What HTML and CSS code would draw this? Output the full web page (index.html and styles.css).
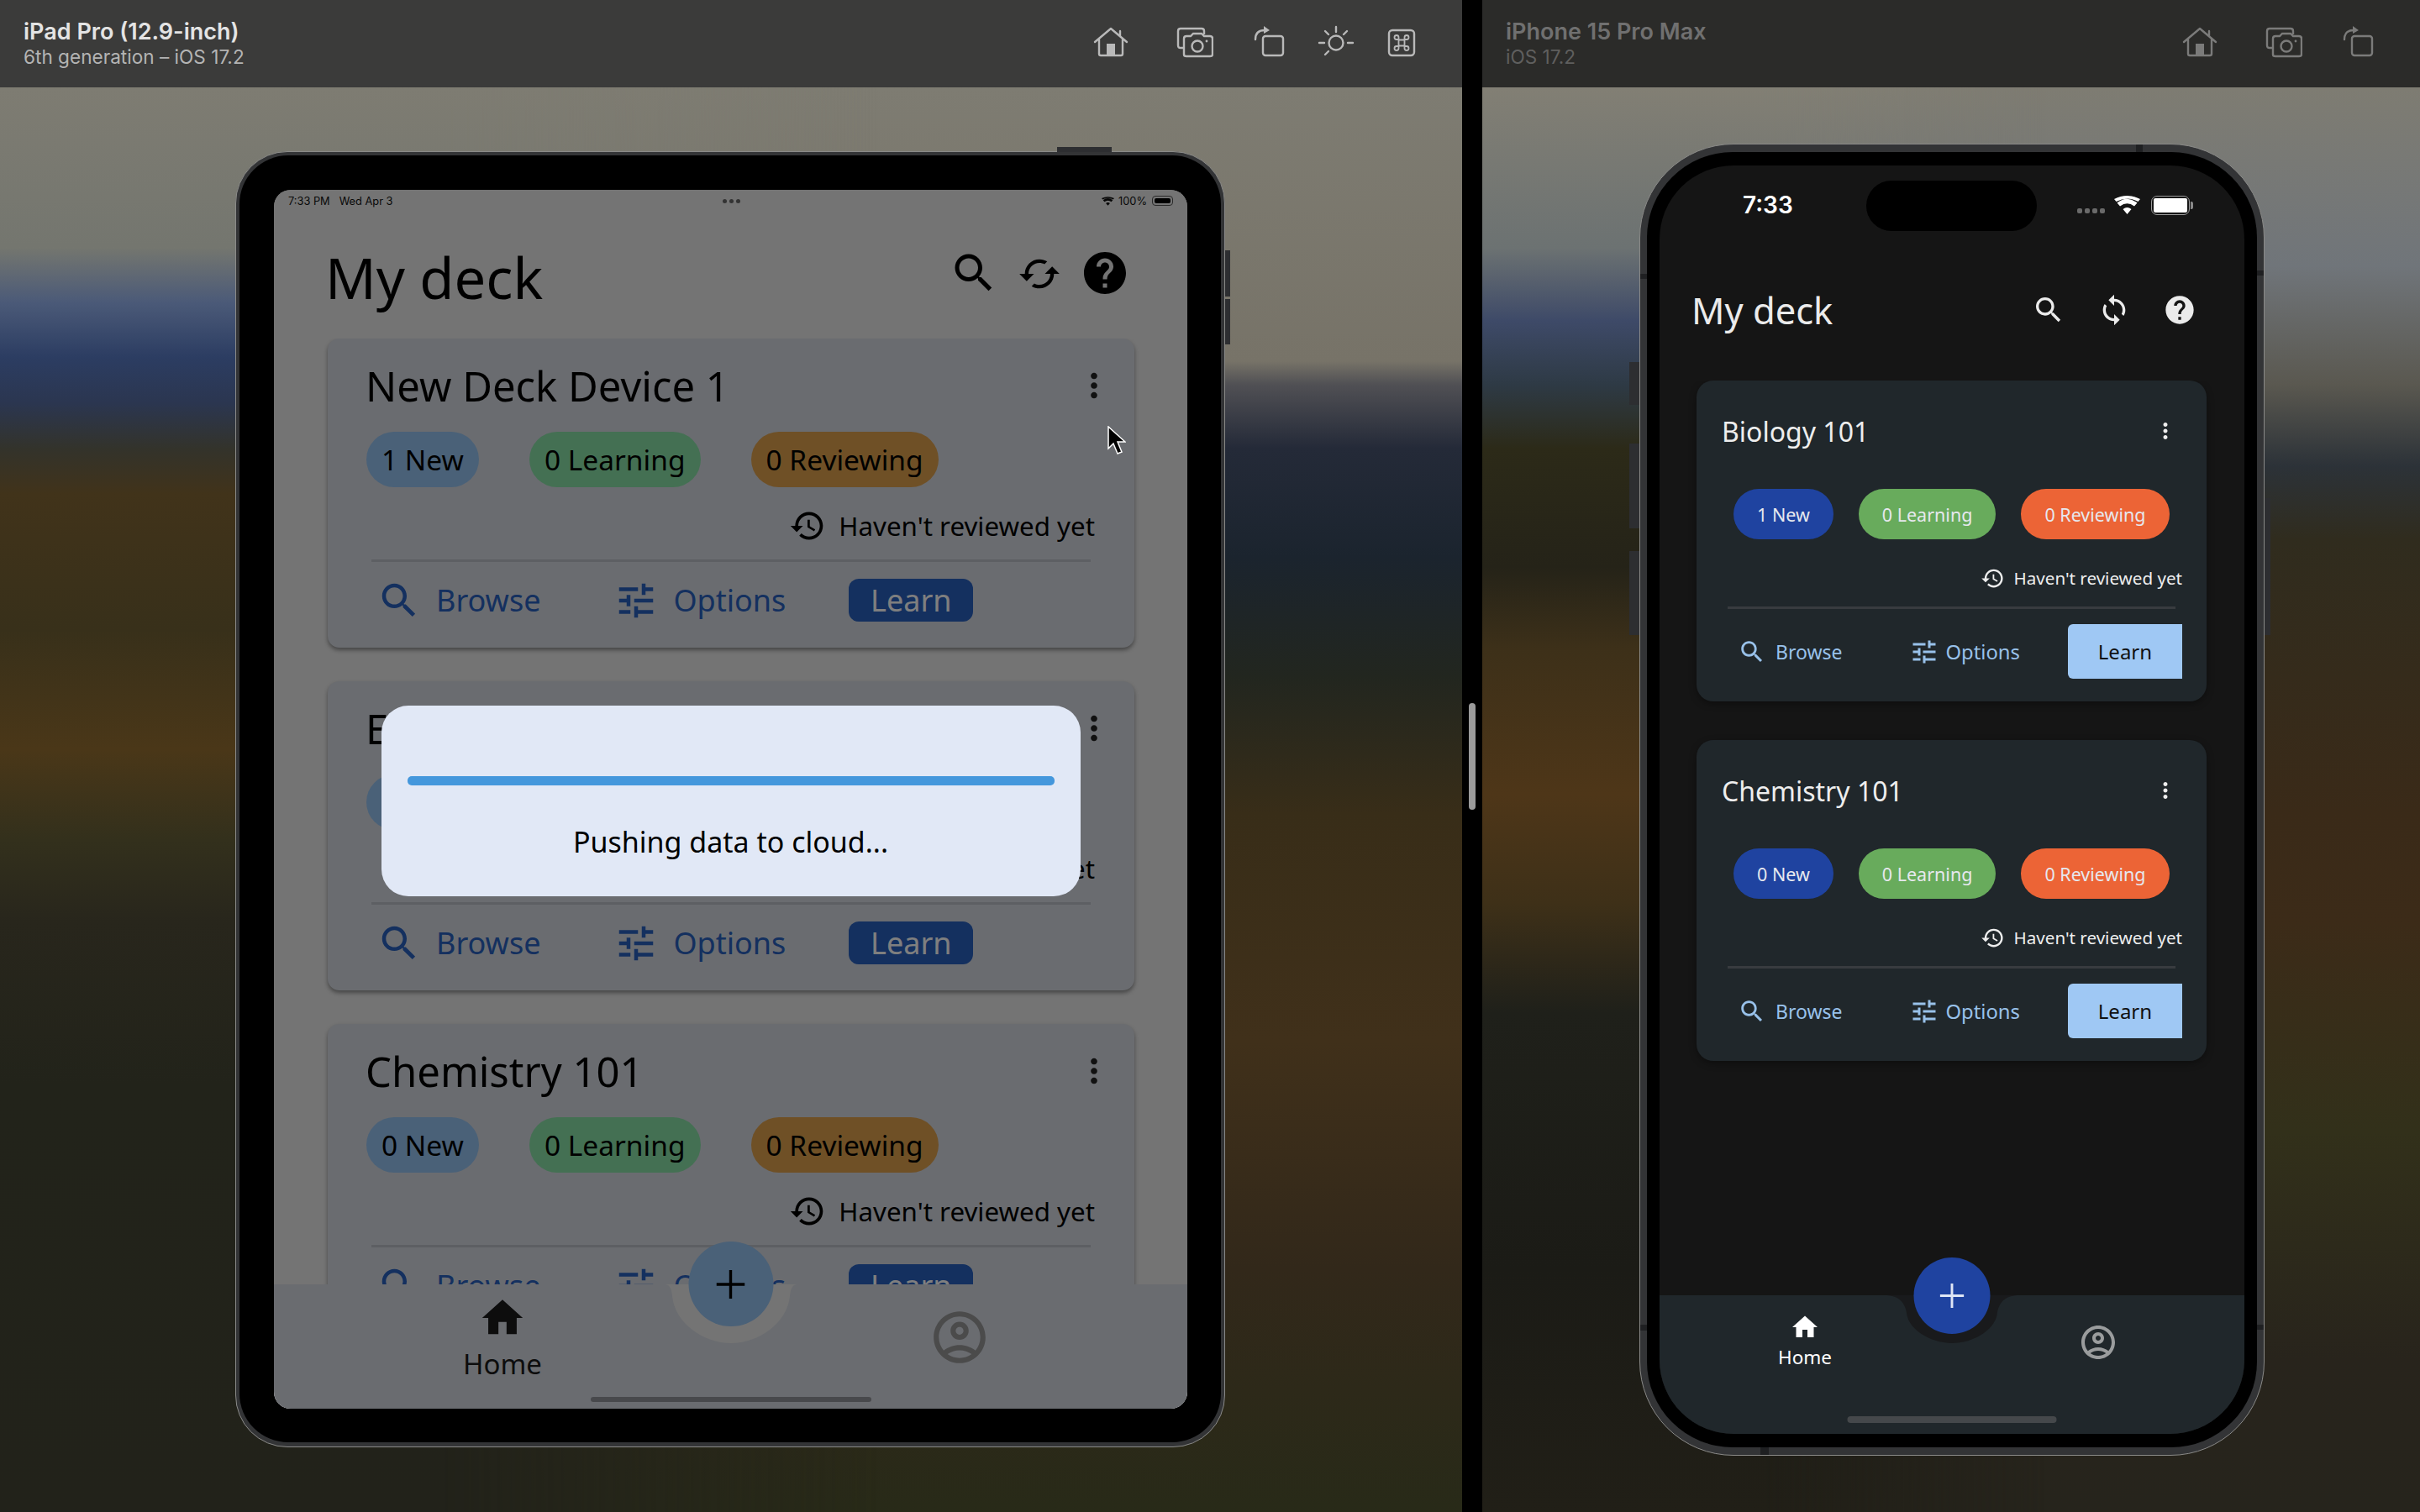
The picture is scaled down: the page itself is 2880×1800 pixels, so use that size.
FILE: index.html
```html
<!DOCTYPE html>
<html lang="en">
<head>
    <meta charset="UTF-8">
    <meta name="viewport" content="width=device-width, initial-scale=1.0">
    <title>Simulator - My deck</title>
    <link rel="stylesheet" href="styles.css">
</head>
<body>
    <svg class="sprite" aria-hidden="true">
        <symbol id="i-search" viewBox="0 0 24 24"><path d="M15.5 14h-.79l-.28-.27C15.41 12.59 16 11.11 16 9.5 16 5.91 13.09 3 9.5 3S3 5.91 3 9.5 5.91 16 9.5 16c1.61 0 3.09-.59 4.23-1.57l.27.28v.79l5 4.99L20.49 19l-4.99-5zm-6 0C7.01 14 5 11.99 5 9.5S7.01 5 9.5 5 14 7.01 14 9.5 11.99 14 9.5 14z"/></symbol>
        <symbol id="i-sync" viewBox="0 0 24 24"><path d="M12 4V1L8 5l4 4V6c3.31 0 6 2.69 6 6 0 1.01-.25 1.97-.7 2.8l1.46 1.46C19.54 15.03 20 13.57 20 12c0-4.42-3.58-8-8-8zm0 14c-3.31 0-6-2.69-6-6 0-1.01.25-1.97.7-2.8L5.24 7.74C4.46 8.97 4 10.43 4 12c0 4.42 3.58 8 8 8v3l4-4-4-4v3z"/></symbol>
        <symbol id="i-help" viewBox="0 0 24 24"><path d="M12 2C6.48 2 2 6.48 2 12s4.48 10 10 10 10-4.48 10-10S17.52 2 12 2zm1 17h-2v-2h2v2zm2.07-7.75l-.9.92C13.45 12.9 13 13.5 13 15h-2v-.5c0-1.1.45-2.1 1.17-2.83l1.24-1.26c.37-.36.59-.86.59-1.41 0-1.1-.9-2-2-2s-2 .9-2 2H8c0-2.21 1.79-4 4-4s4 1.79 4 4c0 .88-.36 1.68-.93 2.25z"/></symbol>
        <symbol id="i-more" viewBox="0 0 24 24"><path d="M12 8c1.1 0 2-.9 2-2s-.9-2-2-2-2 .9-2 2 .9 2 2 2zm0 2c-1.1 0-2 .9-2 2s.9 2 2 2 2-.9 2-2-.9-2-2-2zm0 6c-1.1 0-2 .9-2 2s.9 2 2 2 2-.9 2-2-.9-2-2-2z"/></symbol>
        <symbol id="i-history" viewBox="0 0 24 24"><path d="M13 3c-4.97 0-9 4.03-9 9H1l3.89 3.89.07.14L9 12H6c0-3.87 3.13-7 7-7s7 3.13 7 7-3.13 7-7 7c-1.93 0-3.68-.79-4.94-2.06l-1.42 1.42C8.27 19.99 10.51 21 13 21c4.97 0 9-4.03 9-9s-4.03-9-9-9zm-1 5v5l4.28 2.54.72-1.21-3.5-2.08V8H12z"/></symbol>
        <symbol id="i-tune" viewBox="0 0 24 24"><path d="M3 17v2h6v-2H3zM3 5v2h10V5H3zm10 16v-2h8v-2h-8v-2h-2v6h2zM7 9v2H3v2h4v2h2V9H7zm14 4v-2H11v2h10zm-6-4h2V7h4V5h-4V3h-2v6z"/></symbol>
        <symbol id="i-home" viewBox="0 0 24 24"><path d="M10 20v-6h4v6h5v-8h3L12 3 2 12h3v8z"/></symbol>
        <symbol id="i-account" viewBox="0 0 24 24"><path d="M12 2C6.48 2 2 6.48 2 12s4.48 10 10 10 10-4.48 10-10S17.52 2 12 2zM7.35 18.5C8.66 17.56 10.26 17 12 17s3.34.56 4.65 1.5c-1.31.94-2.91 1.5-4.65 1.5s-3.34-.56-4.65-1.5zm10.79-1.38C16.45 15.8 14.32 15 12 15s-4.45.8-6.14 2.12C4.7 15.73 4 13.95 4 12c0-4.42 3.58-8 8-8s8 3.58 8 8c0 1.95-.7 3.73-1.86 5.12zM12 6c-1.93 0-3.5 1.57-3.5 3.5S10.07 13 12 13s3.5-1.57 3.5-3.5S13.93 6 12 6zm0 5c-.83 0-1.5-.67-1.5-1.5S11.17 8 12 8s1.5.67 1.5 1.5S12.83 11 12 11z"/></symbol>
        <symbol id="i-plus" viewBox="0 0 34 34"><path d="M17 0v34M0 17h34" fill="none" stroke="currentColor" stroke-width="3.4"/></symbol>
        <symbol id="t-home" viewBox="0 0 44 40"><path d="M3 20 22 4l19 16M33 7v6M8 17v17q0 2 2 2h24q2 0 2-2V17" fill="none" stroke="currentColor" stroke-width="2.4" stroke-linecap="round" stroke-linejoin="round"/><path d="M17 22h10v14H17z" fill="currentColor"/></symbol>
        <symbol id="t-camera" viewBox="0 0 44 40"><path d="M8 27H5q-3 0-3-3V7q0-3 3-3h25q3 0 3 3v4" fill="none" stroke="currentColor" stroke-width="2.4"/><path d="M12 13h5l3-3h10l3 3h7q3 0 3 3v19q0 2-3 2H12q-3 0-3-2V16q0-3 3-3z" fill="none" stroke="currentColor" stroke-width="2.4"/><circle cx="25" cy="25" r="6.5" fill="none" stroke="currentColor" stroke-width="2.4"/><circle cx="36" cy="19" r="1.4" fill="currentColor"/></symbol>
        <symbol id="t-rotate" viewBox="0 0 44 40"><rect x="15" y="13" width="24" height="23" rx="3" fill="none" stroke="currentColor" stroke-width="2.4"/><path d="M6 17C6 10 10 6 17 6" fill="none" stroke="currentColor" stroke-width="2.4" stroke-linecap="round"/><path d="M16 1l7 5-7 4z" fill="currentColor"/></symbol>
        <symbol id="t-sun" viewBox="0 0 44 40"><circle cx="22" cy="21" r="8.5" fill="none" stroke="currentColor" stroke-width="2.4"/><path d="M22 2v6M9 7l4 4M35 7l-4 4M2 21h6M36 21h6M9 35l4-4" fill="none" stroke="currentColor" stroke-width="2.4" stroke-linecap="round"/></symbol>
        <symbol id="t-cmd" viewBox="0 0 44 40"><rect x="7" y="6" width="30" height="30" rx="4" fill="none" stroke="currentColor" stroke-width="2.4"/><path d="M18.5 17.5h7v7h-7zM18.5 17.5v-3a2.5 2.5 0 1 0-2.500 2.500h3M25.500 17.500v-3a2.500 2.500 0 1 1 2.500 2.500h-3M18.500 24.500v3a2.500 2.500 0 1 1-2.500-2.500h3M25.500 24.500v3a2.500 2.500 0 1 0 2.500-2.500h-3" fill="none" stroke="currentColor" stroke-width="1.8"/></symbol>
    </svg>

    <div class="sim sim-left">
        <div class="titlebar">
            <div class="device-name">
                <div class="name">iPad Pro (12.9-inch)</div>
                <div class="os">6th generation – iOS 17.2</div>
            </div>
            <div class="tools">
                <svg><use href="#t-home"/></svg>
                <svg class="tool-camera"><use href="#t-camera"/></svg>
                <svg class="tool-rotate"><use href="#t-rotate"/></svg>
                <svg class="tool-sun"><use href="#t-sun"/></svg>
                <svg class="tool-cmd"><use href="#t-cmd"/></svg>
            </div>
        </div>
        <div class="stage stage-tablet">
            <div class="device tablet">
                <span class="side-btn top-btn"></span>
                <span class="side-btn right-btn-a"></span>
                <span class="side-btn right-btn-b"></span>
                <div class="bezel">
                    <div class="screen">
                        <div class="status">
                            <span>7:33 PM</span>
                            <span class="status-date">Wed Apr 3</span>
                            <span class="multitask"><i></i><i></i><i></i></span>
                            <svg class="wifi" viewBox="0 0 31 22"><path d="M15.500 22 10.500 16q5-4 10 0zM7 12.500 3.500 8.500q12-9.500 24 0L24 12.500q-8.500-6.500-17 0zM2.500 7 0 4q15.500-8 31 0l-2.500 3q-13-7-26 0z"/></svg>
                            <span class="battery-pct">100%</span>
                            <span class="battery"><i></i></span>
                        </div>
                        <div class="header">
                            <h1>My deck</h1>
                            <div class="header-icons">
                                <svg><use href="#i-search"/></svg>
                                <svg class="turn"><use href="#i-sync"/></svg>
                                <svg><use href="#i-help"/></svg>
                            </div>
                        </div>
                        <div class="deck-list">
                            <div class="card">
                                <div class="card-head"><h2>New Deck Device 1</h2><svg class="more"><use href="#i-more"/></svg></div>
                                <div class="chips"><span class="chip chip-new">1 New</span><span class="chip chip-learning">0 Learning</span><span class="chip chip-review">0 Reviewing</span></div>
                                <div class="last-review"><svg><use href="#i-history"/></svg><span>Haven't reviewed yet</span></div>
                                <div class="rule"></div>
                                <div class="actions">
                                    <a class="action browse"><svg><use href="#i-search"/></svg>Browse</a>
                                    <a class="action options"><svg><use href="#i-tune"/></svg>Options</a>
                                    <a class="learn">Learn</a>
                                </div>
                            </div>
                            <div class="card">
                                <div class="card-head"><h2>English 101</h2><svg class="more"><use href="#i-more"/></svg></div>
                                <div class="chips"><span class="chip chip-new">0 New</span><span class="chip chip-learning">0 Learning</span><span class="chip chip-review">0 Reviewing</span></div>
                                <div class="last-review"><svg><use href="#i-history"/></svg><span>Haven't reviewed yet</span></div>
                                <div class="rule"></div>
                                <div class="actions">
                                    <a class="action browse"><svg><use href="#i-search"/></svg>Browse</a>
                                    <a class="action options"><svg><use href="#i-tune"/></svg>Options</a>
                                    <a class="learn">Learn</a>
                                </div>
                            </div>
                            <div class="card">
                                <div class="card-head"><h2>Chemistry 101</h2><svg class="more"><use href="#i-more"/></svg></div>
                                <div class="chips"><span class="chip chip-new">0 New</span><span class="chip chip-learning">0 Learning</span><span class="chip chip-review">0 Reviewing</span></div>
                                <div class="last-review"><svg><use href="#i-history"/></svg><span>Haven't reviewed yet</span></div>
                                <div class="rule"></div>
                                <div class="actions">
                                    <a class="action browse"><svg><use href="#i-search"/></svg>Browse</a>
                                    <a class="action options"><svg><use href="#i-tune"/></svg>Options</a>
                                    <a class="learn">Learn</a>
                                </div>
                            </div>
                        </div>
                        <div class="tabbar">
                            <svg class="notch" viewBox="0 0 158 70"><path d="M0 0H158C153 0 150 3 149 14 146 46 112 70 79 70 46 70 12 46 9 14 8 3 5 0 0 0Z"/></svg>
                            <div class="fab"><svg><use href="#i-plus"/></svg></div>
                            <div class="tab-home"><svg><use href="#i-home"/></svg><span>Home</span></div>
                            <svg class="tab-profile"><use href="#i-account"/></svg>
                            <div class="home-bar"></div>
                        </div>
                        <div class="overlay">
                            <div class="dialog">
                                <div class="progress"></div>
                                <p>Pushing data to cloud...</p>
                            </div>
                        </div>
                    </div>
                </div>
                <svg class="cursor" viewBox="0 0 22 35"><path d="M1 1v26l6-6 5 12 5-2-5-12h9z" fill="#000" stroke="#fff" stroke-width="1.5"/></svg>
            </div>
        </div>
    </div>

    <div class="split"><span class="split-handle"></span></div>

    <div class="sim sim-right">
        <div class="titlebar">
            <div class="device-name">
                <div class="name">iPhone 15 Pro Max</div>
                <div class="os">iOS 17.2</div>
            </div>
            <div class="tools">
                <svg><use href="#t-home"/></svg>
                <svg class="tool-camera"><use href="#t-camera"/></svg>
                <svg class="tool-rotate"><use href="#t-rotate"/></svg>
            </div>
        </div>
        <div class="stage stage-phone">
            <div class="device phone">
                <span class="side-btn action-btn"></span>
                <span class="side-btn vol-up"></span>
                <span class="side-btn vol-down"></span>
                <span class="side-btn power-btn"></span>
                <span class="band band-top"></span>
                <span class="band band-bottom"></span>
                <span class="band band-left-a"></span>
                <span class="band band-left-b"></span>
                <span class="band band-right-a"></span>
                <span class="band band-right-b"></span>
                <div class="bezel">
                    <div class="screen">
                        <div class="island"></div>
                        <div class="status">
                            <span class="clock">7:33</span>
                            <span class="signal"><i></i><i></i><i></i><i></i></span>
                            <svg class="wifi" viewBox="0 0 31 22"><path d="M15.500 22 10.500 16q5-4 10 0zM7 12.500 3.500 8.500q12-9.500 24 0L24 12.500q-8.500-6.500-17 0zM2.500 7 0 4q15.500-8 31 0l-2.500 3q-13-7-26 0z"/></svg>
                            <span class="battery"><i></i></span>
                        </div>
                        <div class="header">
                            <h1>My deck</h1>
                            <div class="header-icons">
                                <svg><use href="#i-search"/></svg>
                                <svg><use href="#i-sync"/></svg>
                                <svg><use href="#i-help"/></svg>
                            </div>
                        </div>
                        <div class="deck-list">
                            <div class="card">
                                <div class="card-head"><h2>Biology 101</h2><svg class="more"><use href="#i-more"/></svg></div>
                                <div class="chips"><span class="chip chip-new">1 New</span><span class="chip chip-learning">0 Learning</span><span class="chip chip-review">0 Reviewing</span></div>
                                <div class="last-review"><svg><use href="#i-history"/></svg><span>Haven't reviewed yet</span></div>
                                <div class="rule"></div>
                                <div class="actions">
                                    <a class="action browse"><svg><use href="#i-search"/></svg>Browse</a>
                                    <a class="action options"><svg><use href="#i-tune"/></svg>Options</a>
                                    <a class="learn">Learn</a>
                                </div>
                            </div>
                            <div class="card">
                                <div class="card-head"><h2>Chemistry 101</h2><svg class="more"><use href="#i-more"/></svg></div>
                                <div class="chips"><span class="chip chip-new">0 New</span><span class="chip chip-learning">0 Learning</span><span class="chip chip-review">0 Reviewing</span></div>
                                <div class="last-review"><svg><use href="#i-history"/></svg><span>Haven't reviewed yet</span></div>
                                <div class="rule"></div>
                                <div class="actions">
                                    <a class="action browse"><svg><use href="#i-search"/></svg>Browse</a>
                                    <a class="action options"><svg><use href="#i-tune"/></svg>Options</a>
                                    <a class="learn">Learn</a>
                                </div>
                            </div>
                        </div>
                        <div class="tabbar">
                            <svg class="notch" viewBox="0 0 161 57"><path d="M0 0H161C146 0 136 6 134 24 130 42 105 57 80.500 57 56 57 31 42 27 24 25 6 15 0 0 0Z"/></svg>
                            <div class="fab"><svg><use href="#i-plus"/></svg></div>
                            <div class="tab-home"><svg><use href="#i-home"/></svg><span>Home</span></div>
                            <svg class="tab-profile"><use href="#i-account"/></svg>
                            <div class="home-bar"></div>
                        </div>
                    </div>
                </div>
            </div>
        </div>
    </div>
</body>
</html>
```

FILE: styles.css
```css
* {
    margin: 0;
    padding: 0;
    box-sizing: border-box;
}

body {
    display: flex;
    width: 2880px;
    height: 1800px;
    overflow: hidden;
    background: #000;
    font-family: "Noto Sans", sans-serif;
}

.sprite {
    position: absolute;
    width: 0;
    height: 0;
}

svg {
    display: block;
    flex: none;
    fill: currentColor;
}

/* simulator windows */
.sim {
    display: flex;
    flex-direction: column;
}

.sim-left {
    width: 1740px;
}

.sim-right {
    width: 1116px;
}

.split {
    width: 24px;
    display: flex;
    align-items: center;
    justify-content: center;
}

.split-handle {
    width: 8px;
    height: 127px;
    border-radius: 4px;
    background: #9b9b9b;
}

.titlebar {
    display: flex;
    align-items: center;
    height: 104px;
    padding: 0 52px 0 28px;
    font-family: Inter, sans-serif;
}

.sim-left .titlebar {
    background: #3b3b3a;
    padding-right: 50px;
}

.sim-right .titlebar {
    background: #2b2b29;
}

.name {
    font-size: 27px;
    font-weight: 600;
    line-height: 32px;
}

.os {
    font-size: 22.600px;
    line-height: 28px;
}

.sim-left .name { color: #e4e4e4; }
.sim-left .os { color: #b4b4b4; }
.sim-right .name { color: #707070; }
.sim-right .os { color: #5f5f5e; }

.tools {
    display: flex;
    margin-left: auto;
    padding-bottom: 5px;
}

.sim-left .tools { color: #b9b9b9; }
.sim-right .tools { color: #7b7b7a; }

.tools svg {
    width: 44px;
    height: 40px;
}

.tools .tool-camera { margin-left: 56px; }
.tools .tool-rotate { margin-left: 44px; }
.tools .tool-sun { margin-left: 36px; }
.tools .tool-cmd { margin-left: 34px; }

/* blurred wallpaper behind the devices */
.stage {
    position: relative;
    flex: 1;
}

.stage-tablet {
    padding: 76px 0 0 280px;
    background: linear-gradient(180deg, #7e7c72 0, #777368 326px, #505054 354px, #242a38 430px, #1b242e 560px, #22261f 701px, #382d18 864px, #40301a 1135px, #32281a 1406px, #282a18 1696px);
}

.stage-tablet::before {
    content: "";
    position: absolute;
    inset: 0;
    background: linear-gradient(180deg, #7e7c72 0, #74766f 191px, #4b5a78 256px, #2c3d62 321px, #2b3650 376px, #33332b 430px, #41331a 484px, #38301a 646px, #4a3718 788px, #33301c 896px, #28261c 994px, #22231a 1189px, #22221a 1696px);
    -webkit-mask-image: linear-gradient(90deg, #000 30%, transparent 60%);
    mask-image: linear-gradient(90deg, #000 30%, transparent 60%);
}

.stage-phone {
    padding: 67px 0 0 187px;
    background: linear-gradient(180deg, #7e7c72 0, #70757a 213px, #5a5850 354px, #2c3238 451px, #302c1e 538px, #3a2a18 864px, #3c2b18 994px, #32301a 1243px, #28241c 1514px, #26241c 1696px);
}

.stage-phone::before {
    content: "";
    position: absolute;
    inset: 0;
    background: linear-gradient(180deg, #827f74 0, #6c7272 191px, #3e4a68 278px, #2e3a45 354px, #2c2a18 430px, #252318 571px, #3d3019 668px, #4e3618 842px, #3e3018 972px, #1f201a 1102px, #1b1b16 1406px, #211f17 1696px);
    -webkit-mask-image: linear-gradient(90deg, #000 30%, transparent 60%);
    mask-image: linear-gradient(90deg, #000 30%, transparent 60%);
}

/* device frames */
.device {
    position: relative;
    background: #333436;
    border: 1px solid #8a8a88;
}

.tablet {
    width: 1178px;
    padding: 4px 4px 5px;
    border-radius: 62px;
}

.phone {
    width: 744px;
    padding: 9px 8px;
    border-radius: 112px;
}

.bezel {
    background: #000;
}

.tablet .bezel {
    padding: 41px 41px 40px;
    border-radius: 58px;
}

.phone .bezel {
    padding: 16px 15px;
    border-radius: 102px;
}

.screen {
    position: relative;
    display: flex;
    flex-direction: column;
    overflow: hidden;
}

.tablet .screen {
    width: 1087px;
    height: 1451px;
    border-radius: 20px;
    background: #e8e8e8;
}

.phone .screen {
    width: 696px;
    height: 1510px;
    border-radius: 88px;
    background: #151515;
}

.side-btn {
    position: absolute;
    background: #2d2e31;
}

.top-btn { left: 977px; top: -6px; width: 65px; height: 6px; }
.right-btn-a { right: -7px; top: 117px; width: 6px; height: 55px; }
.right-btn-b { right: -7px; top: 175px; width: 6px; height: 54px; }
.action-btn { left: -13px; top: 259px; width: 12px; height: 51px; }
.vol-up { left: -13px; top: 356px; width: 12px; height: 101px; }
.vol-down { left: -13px; top: 484px; width: 12px; height: 100px; }
.power-btn { right: -8px; top: 421px; width: 7px; height: 163px; }

.band {
    position: absolute;
    background: #1f2022;
}

.band-top { left: 590px; top: 0; width: 8px; height: 9px; }
.band-bottom { left: 143px; bottom: 0; width: 10px; height: 9px; }
.band-left-a { left: 0; top: 154px; width: 8px; height: 6px; }
.band-left-b { left: 0; top: 1405px; width: 8px; height: 7px; }
.band-right-a { right: 0; top: 150px; width: 8px; height: 6px; }
.band-right-b { right: 0; top: 1405px; width: 8px; height: 6px; }

.cursor {
    position: absolute;
    left: 1037px;
    top: 326px;
    width: 22px;
    height: 35px;
}

/* status bars */
.status {
    display: flex;
    align-items: center;
    font-family: Inter, sans-serif;
}

.tablet .status {
    position: relative;
    height: 26px;
    padding: 0 17px;
    font-size: 12.800px;
    color: #111;
}

.status-date {
    margin-left: 11px;
}

.multitask {
    display: flex;
    gap: 3px;
    margin-left: 393px;
}

.multitask i {
    width: 5px;
    height: 5px;
    border-radius: 50%;
    background: #666;
}

.tablet .wifi {
    width: 15px;
    height: 11px;
    margin-left: auto;
}

.battery-pct {
    margin-left: 5px;
}

.battery {
    position: relative;
    display: block;
    padding: 2px;
    border: 1px solid #555;
    border-radius: 4px;
}

.battery i {
    display: block;
    height: 100%;
    border-radius: 2px;
    background: currentColor;
}

.tablet .battery {
    width: 25px;
    height: 12px;
    margin-left: 6px;
    color: #000;
}

.island {
    position: absolute;
    left: 246px;
    top: 18px;
    width: 203px;
    height: 60px;
    border-radius: 30px;
    background: #000;
}

.phone .status {
    height: 30px;
    margin-top: 32px;
    padding: 0 65px 0 99px;
    color: #fff;
}

.clock {
    font-size: 28px;
    font-weight: 600;
}

.signal {
    display: flex;
    gap: 3px;
    margin-left: auto;
    padding-top: 14px;
}

.signal i {
    width: 6px;
    height: 6px;
    border-radius: 2px;
    background: #6a6a6a;
}

.phone .wifi {
    width: 31px;
    height: 22px;
    margin: 0 0 0 11px;
    color: #fff;
}

.phone .battery {
    width: 46px;
    height: 23px;
    margin-left: 13px;
    border-color: #9a9a9a;
    border-radius: 7px;
    color: #fff;
}

.phone .battery::after {
    content: "";
    position: absolute;
    top: 6px;
    right: -5px;
    width: 3px;
    height: 9px;
    border-radius: 0 2px 2px 0;
    background: #8a8a8a;
}

/* page header */
.header {
    display: flex;
    align-items: center;
    justify-content: space-between;
}

h1, h2 {
    font-weight: 400;
}

.tablet .header {
    height: 60px;
    margin-top: 43px;
    padding: 0 68px 0 61px;
    color: #000;
}

.tablet h1 {
    font-size: 67px;
    line-height: 60px;
    padding-top: 10px;
}

.phone .header {
    margin-top: 90px;
    padding: 0 57px 0 38px;
    color: #ebebeb;
}

.phone h1 {
    font-size: 43.500px;
    line-height: 40px;
}

.header-icons {
    display: flex;
    align-items: center;
}

.tablet .header-icons {
    gap: 18px;
}

.tablet .header-icons svg {
    width: 60px;
    height: 60px;
}

.phone .header-icons {
    gap: 38px;
}

.phone .header-icons svg {
    width: 40px;
    height: 40px;
}

.tablet .header-icons .turn {
    width: 52px;
    height: 52px;
    margin: 2px 4px 0;
    transform: rotate(90deg);
}

/* deck cards */
.deck-list {
    flex: 1;
    display: flex;
    flex-direction: column;
    overflow: hidden;
}

.tablet .deck-list {
    gap: 40px;
    margin-top: 48px;
    padding: 0 63px 0 64px;
}

.phone .deck-list {
    gap: 46px;
    margin-top: 64px;
    padding: 0 45px 0 44px;
}

.card {
    flex: none;
}

.tablet .card {
    height: 368px;
    padding: 28px 47px 0 45px;
    border-radius: 14px;
    background: #d4d8e0;
    box-shadow: 0 3px 5px rgba(0, 0, 0, 0.4);
    color: #000;
}

.phone .card {
    height: 382px;
    padding: 44px 29px 0 30px;
    border-radius: 20px;
    background: #20272b;
    box-shadow: 0 3px 8px rgba(0, 0, 0, 0.35);
    color: #eee;
}

.card-head {
    display: flex;
    align-items: center;
    justify-content: space-between;
}

.tablet .card-head {
    height: 56px;
}

.tablet h2 {
    font-size: 49px;
}

.tablet .more {
    width: 46px;
    height: 46px;
    margin-right: -22px;
    color: #222;
}

.phone .card-head {
    height: 32px;
}

.phone h2 {
    font-size: 32px;
}

.phone .more {
    width: 30px;
    height: 30px;
    margin-right: 5px;
    color: #eee;
}

.chips {
    display: flex;
}

.chip {
    display: flex;
    align-items: center;
    border-radius: 999px;
    white-space: nowrap;
}

.tablet .chips {
    gap: 60px;
    margin-top: 27px;
    margin-left: 1px;
}

.tablet .chip {
    height: 66px;
    padding: 0 18px;
    font-size: 33.500px;
}

.tablet .chip-new { background: #94c2f0; }
.tablet .chip-learning { background: #88e0a6; }
.tablet .chip-review { background: #dea04c; }

.phone .chips {
    gap: 30px;
    margin-top: 53px;
    margin-left: 14px;
}

.phone .chip {
    height: 60px;
    padding: 0 28px;
    font-size: 21.500px;
    color: #e6e8ee;
}

.phone .chip-new { background: #1f43a0; }
.phone .chip-learning { background: #68ab5c; }
.phone .chip-review { background: #ec6436; }

.last-review {
    display: flex;
    align-items: center;
    justify-content: flex-end;
}

.tablet .last-review {
    gap: 15px;
    height: 44px;
    margin-top: 24px;
    font-size: 31.300px;
}

.tablet .last-review svg {
    width: 44px;
    height: 44px;
}

.phone .last-review {
    gap: 11px;
    height: 30px;
    margin-top: 31px;
    font-size: 20.600px;
}

.phone .last-review svg {
    width: 29px;
    height: 29px;
}

.tablet .rule {
    height: 3px;
    margin: 18px 5px 0 7px;
    background: #babec6;
}

.phone .rule {
    height: 3px;
    margin: 19px 8px 0 7px;
    background: #383b3f;
}

.actions {
    display: flex;
    align-items: center;
}

.action {
    display: flex;
    align-items: center;
}

.learn {
    display: flex;
    align-items: center;
    justify-content: center;
}

.tablet .actions {
    margin-top: 20px;
    padding-left: 13px;
    height: 51px;
}

.tablet .action {
    gap: 17px;
    font-size: 36px;
    color: #2860be;
}

.tablet .action svg {
    width: 54px;
    height: 54px;
}

.tablet .browse { margin-right: 87px; }
.tablet .options { margin-right: 75px; }

.tablet .learn {
    width: 148px;
    height: 51px;
    border-radius: 12px;
    background: #2860be;
    color: #fff;
    font-size: 36px;
}

.phone .actions {
    margin-top: 18px;
    height: 65px;
    padding-left: 19px;
}

.phone .action {
    gap: 11px;
    font-size: 23px;
    color: #98c1ea;
}

.phone .action svg {
    width: 34px;
    height: 34px;
}

.phone .options {
    gap: 8px;
    font-size: 23.800px;
}

.phone .options svg {
    width: 36px;
    height: 36px;
}

.phone .browse { margin-right: 79px; }
.phone .options { margin-right: 57px; }

.phone .learn {
    width: 136px;
    height: 65px;
    border-radius: 6px 0 0 6px;
    background: #9fc8f4;
    color: #111;
    font-size: 24px;
}

/* bottom bar */
.tabbar {
    position: relative;
    display: flex;
    flex: none;
    align-items: flex-start;
}

.tablet .tabbar {
    height: 148px;
    background: #d4d8e0;
    color: #1a1a1a;
}

.phone .tabbar {
    height: 165px;
    background: #20272b;
    color: #fff;
}

.notch {
    position: absolute;
    top: 0;
    left: 50%;
    transform: translateX(-50%);
}

.tablet .notch {
    width: 158px;
    height: 70px;
    color: #e8e8e8;
}

.phone .notch {
    width: 161px;
    height: 57px;
    color: #191a1c;
}

.fab {
    position: absolute;
    left: 50%;
    display: flex;
    align-items: center;
    justify-content: center;
    border-radius: 50%;
    transform: translateX(-50%);
}

.tablet .fab {
    top: -51px;
    width: 101px;
    height: 101px;
    background: #94c2f0;
    color: #000;
}

.phone .fab {
    top: -45px;
    width: 91px;
    height: 91px;
    background: #1f43a0;
    color: #dfe6f5;
}

.tablet .fab svg {
    width: 34px;
    height: 34px;
}

.phone .fab svg {
    width: 29px;
    height: 29px;
}

.tab-home {
    display: flex;
    flex-direction: column;
    align-items: center;
}

.tablet .tab-home {
    width: 160px;
    margin: 11px 0 0 192px;
    font-size: 33px;
}

.tablet .tab-home svg {
    width: 58px;
    height: 58px;
    margin-bottom: 3px;
}

.phone .tab-home {
    width: 100px;
    margin: 20px 0 0 123px;
    font-size: 22.500px;
}

.phone .tab-home svg {
    width: 36px;
    height: 36px;
    margin-bottom: 2px;
}

.tablet .tab-profile {
    width: 74px;
    height: 74px;
    margin: 26px 0 0 427px;
    color: #969696;
}

.phone .tab-profile {
    width: 48px;
    height: 48px;
    margin: 32px 0 0 275px;
    color: #9a9c9d;
}

.home-bar {
    position: absolute;
    left: 50%;
    transform: translateX(-50%);
    border-radius: 4px;
}

.tablet .home-bar {
    bottom: 8px;
    width: 334px;
    height: 6px;
    background: #919398;
}

.phone .home-bar {
    bottom: 13px;
    width: 249px;
    height: 8px;
    background: #45484b;
}

/* sync dialog on the tablet */
.overlay {
    position: absolute;
    inset: 0;
    display: flex;
    align-items: center;
    justify-content: center;
    padding-top: 4px;
    background: rgba(0, 0, 0, 0.5);
}

.dialog {
    width: 832px;
    height: 227px;
    padding: 84px 31px 0;
    border-radius: 32px;
    background: #e1e8f6;
    text-align: center;
}

.progress {
    height: 11px;
    border-radius: 5px;
    background: #4497dc;
}

.dialog p {
    margin-top: 44px;
    font-size: 34px;
    color: #000;
}
```
